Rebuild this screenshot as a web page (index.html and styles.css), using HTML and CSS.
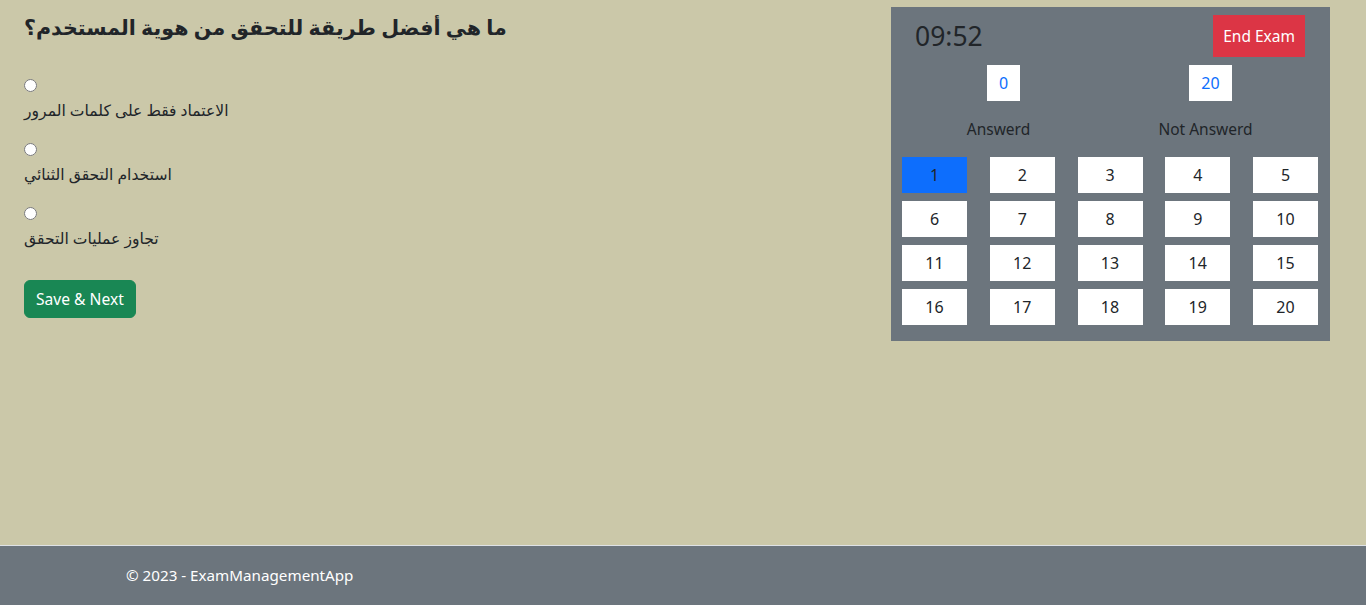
FILE: index.html
```html
<!DOCTYPE html>
<html lang="en">
<head>
<meta charset="utf-8">
<title>Exam</title>
<link rel="stylesheet" href="styles.css">
</head>
<body>
<main class="page">
  <section class="question">
    <h3 class="q-title">ما هي أفضل طريقة للتحقق من هوية المستخدم؟</h3>
    <div class="option">
      <input type="radio" name="ans" id="a1" class="radio">
      <label for="a1" class="opt-label">الاعتماد فقط على كلمات المرور</label>
    </div>
    <div class="option">
      <input type="radio" name="ans" id="a2" class="radio">
      <label for="a2" class="opt-label">استخدام التحقق الثنائي</label>
    </div>
    <div class="option">
      <input type="radio" name="ans" id="a3" class="radio">
      <label for="a3" class="opt-label">تجاوز عمليات التحقق</label>
    </div>
    <button class="btn-save">Save &amp; Next</button>
  </section>

  <aside class="panel">
    <div class="panel-top">
      <div class="timer">09:52</div>
      <button class="btn-end">End Exam</button>
    </div>
    <div class="stats">
      <div class="stat">
        <span class="count">0</span>
        <span class="stat-label">Answerd</span>
      </div>
      <div class="stat">
        <span class="count">20</span>
        <span class="stat-label">Not Answerd</span>
      </div>
    </div>
    <div class="qgrid">
      <button class="qbtn active">1</button>
      <button class="qbtn">2</button>
      <button class="qbtn">3</button>
      <button class="qbtn">4</button>
      <button class="qbtn">5</button>
      <button class="qbtn">6</button>
      <button class="qbtn">7</button>
      <button class="qbtn">8</button>
      <button class="qbtn">9</button>
      <button class="qbtn">10</button>
      <button class="qbtn">11</button>
      <button class="qbtn">12</button>
      <button class="qbtn">13</button>
      <button class="qbtn">14</button>
      <button class="qbtn">15</button>
      <button class="qbtn">16</button>
      <button class="qbtn">17</button>
      <button class="qbtn">18</button>
      <button class="qbtn">19</button>
      <button class="qbtn">20</button>
    </div>
  </aside>
</main>
<footer class="footer">
  <div class="footer-inner">&copy; 2023 - ExamManagementApp</div>
</footer>
</body>
</html>
```

FILE: styles.css
```css
* { box-sizing: border-box; }
html, body { margin: 0; padding: 0; }
body {
  min-height: 100vh;
  display: flex;
  flex-direction: column;
  background: #cbc8a9;
  color: #212529;
  font-family: "Noto Sans", "DejaVu Sans", sans-serif;
  font-size: 16px;
  line-height: 24px;
}
.page {
  flex: 1;
  display: flex;
  justify-content: space-between;
  align-items: flex-start;
  padding: 0 36px 0 24px;
}
.question { display: flex; flex-direction: column; align-items: flex-start; }
.q-title {
  margin: 9px 0 31px;
  font-size: 20.6px;
  line-height: 36px;
  font-weight: 700;
}
.option {
  display: flex;
  flex-direction: column;
  align-items: flex-start;
  margin-bottom: 18px;
}
.radio {
  width: 13px;
  height: 13px;
  margin: 3px 0 6px;
}
.opt-label { display: block; line-height: 24px; font-size: 15.6px; }
.btn-save {
  margin-top: 12px;
  background: #198754;
  color: #fff;
  border: 1px solid #198754;
  border-radius: 6px;
  padding: 6px 11px;
  font: inherit;
  font-size: 15.6px;
  line-height: 24px;
}
.panel {
  margin-top: 7px;
  width: 439px;
  background: #6c757d;
  padding: 8px 12px 16px 11px;
}
.panel-top {
  display: flex;
  justify-content: space-between;
  align-items: center;
  padding-left: 13px;
  padding-right: 13px;
}
.timer {
  font-size: 26.5px;
  line-height: 42px;
  font-weight: 400;
  color: #212529;
}
.btn-end {
  background: #dc3545;
  color: #fff;
  border: none;
  border-radius: 0;
  padding: 9px 10px;
  font: inherit;
  font-size: 15.5px;
  line-height: 24px;
}
.stats {
  display: flex;
  margin: 8px 0 16px -7px;
  padding: 0 9px 0 0;
}
.stat {
  flex: 1;
  display: flex;
  flex-direction: column;
  align-items: center;
}
.count {
  background: #fff;
  color: #0d6efd;
  padding: 6px 12px;
  line-height: 24px;
  margin-left: 10px;
}
.stat-label { margin-top: 16px; line-height: 24px; font-size: 15.5px; }
.qgrid {
  display: grid;
  grid-template-columns: repeat(5, 65px);
  justify-content: space-between;
  row-gap: 8px;
}
.qbtn {
  height: 36px;
  background: #fff;
  border: none;
  padding: 0;
  font: inherit;
  color: #212529;
}
.qbtn.active { background: #0d6efd; }
.footer {
  height: 60px;
  border-top: 1px solid #dee2e6;
  background: #6c757d;
  color: #fff;
}
.footer-inner {
  width: 1140px;
  margin: 0 auto;
  padding: 0 12px 0 13px;
  line-height: 59px;
  font-size: 15.2px;
}
```
